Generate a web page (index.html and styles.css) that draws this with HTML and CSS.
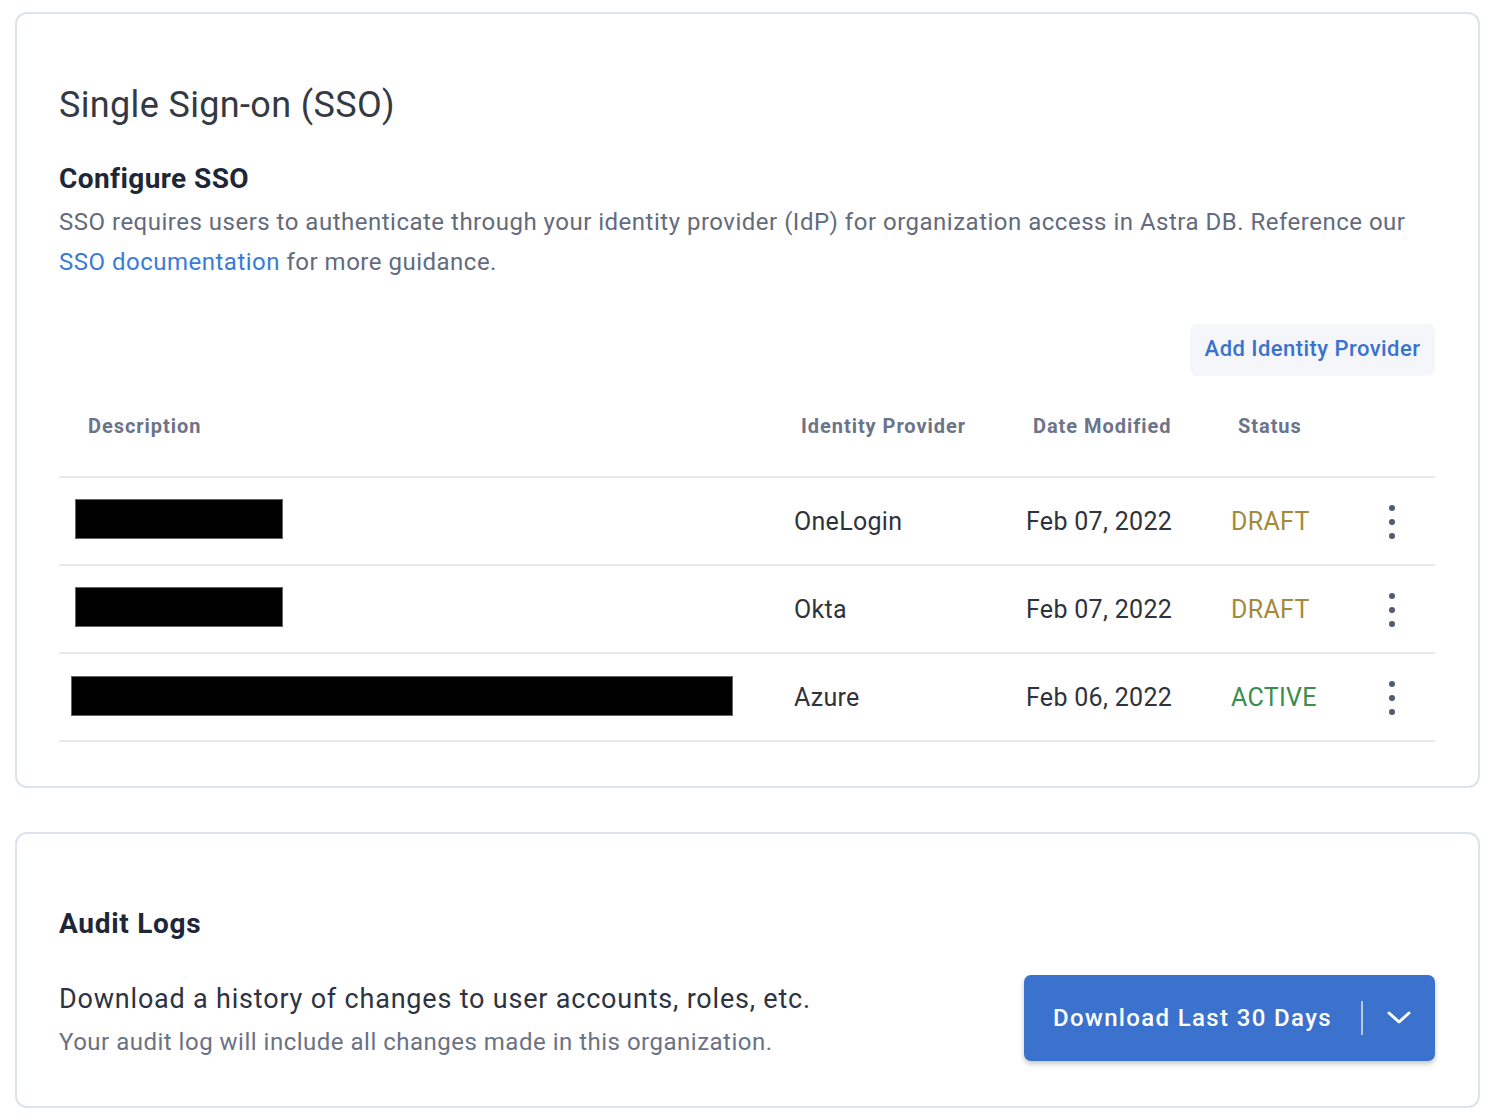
FILE: index.html
```html
<!DOCTYPE html>
<html lang="en">
<head>
<meta charset="utf-8">
<title>Single Sign-on (SSO)</title>
<link rel="stylesheet" href="styles.css">
</head>
<body>
<main class="page">
  <section class="card sso">
    <h1 class="title">Single Sign-on (SSO)</h1>
    <h2 class="heading">Configure SSO</h2>
    <p class="desc">SSO requires users to authenticate through your identity provider (IdP) for organization access in Astra DB. Reference our <a class="link" href="#">SSO documentation</a> for more guidance.</p>
    <div class="actions">
      <button class="btn-ghost" type="button">Add Identity Provider</button>
    </div>
    <div class="table">
      <div class="thead">
        <div class="th th-desc">Description</div>
        <div class="th">Identity Provider</div>
        <div class="th">Date Modified</div>
        <div class="th">Status</div>
        <div class="th"></div>
      </div>
      <div class="tr">
        <div class="td td-desc"><span class="redact redact-sm"></span></div>
        <div class="td">OneLogin</div>
        <div class="td">Feb 07, 2022</div>
        <div class="td status draft">DRAFT</div>
        <div class="td td-menu"><span class="kebab"><i></i><i></i><i></i></span></div>
      </div>
      <div class="tr">
        <div class="td td-desc"><span class="redact redact-sm"></span></div>
        <div class="td">Okta</div>
        <div class="td">Feb 07, 2022</div>
        <div class="td status draft">DRAFT</div>
        <div class="td td-menu"><span class="kebab"><i></i><i></i><i></i></span></div>
      </div>
      <div class="tr">
        <div class="td td-desc"><span class="redact redact-lg"></span></div>
        <div class="td">Azure</div>
        <div class="td">Feb 06, 2022</div>
        <div class="td status active">ACTIVE</div>
        <div class="td td-menu"><span class="kebab"><i></i><i></i><i></i></span></div>
      </div>
    </div>
  </section>

  <section class="card audit">
    <h2 class="heading">Audit Logs</h2>
    <div class="audit-row">
      <div class="audit-text">
        <p class="audit-main">Download a history of changes to user accounts, roles, etc.</p>
        <p class="audit-sub">Your audit log will include all changes made in this organization.</p>
      </div>
      <div class="split-btn">
        <button class="split-main" type="button">Download Last 30 Days</button>
        <span class="split-div"></span>
        <button class="split-caret" type="button" aria-label="More options">
          <svg width="24" height="14" viewBox="0 0 24 14"><path d="M2 2 L12 11 L22 2" fill="none" stroke="#ffffff" stroke-width="3" stroke-linecap="round" stroke-linejoin="round"/></svg>
        </button>
      </div>
    </div>
  </section>
</main>
</body>
</html>
```

FILE: styles.css
```css
* { box-sizing: border-box; }

html, body {
  margin: 0;
  padding: 0;
  background: #ffffff;
}

body {
  font-family: Roboto, "Liberation Sans", Arial, sans-serif;
  color: #2f333b;
}

.page {
  width: 1500px;
  padding: 12px 20px 0 15px;
  display: flex;
  flex-direction: column;
  gap: 44px;
}

.card {
  border: 2px solid #dde2ec;
  border-radius: 12px;
  background: #ffffff;
  padding: 0 43px 44px 42px;
}

.sso { padding-top: 69px; }

.title {
  margin: 0;
  font-size: 36px;
  line-height: 44px;
  font-weight: 400;
  letter-spacing: 0.35px;
  color: #343a44;
}

.heading {
  margin: 34px 0 0;
  font-size: 28px;
  line-height: 36px;
  font-weight: 700;
  letter-spacing: 0.4px;
  color: #1e2738;
}

.desc {
  margin: 5px 0 0;
  font-size: 24px;
  line-height: 40px;
  letter-spacing: 0.5px;
  color: #636b7c;
}

.link {
  color: #3b7bd8;
  text-decoration: none;
}

.actions {
  display: flex;
  justify-content: flex-end;
  margin-top: 42px;
}

.btn-ghost {
  height: 52px;
  width: 245px;
  border: none;
  border-radius: 7px;
  background: #f4f6f9;
  color: #3a72cd;
  font-family: Roboto, "Liberation Sans", Arial, sans-serif;
  font-size: 22px;
  font-weight: 500;
  letter-spacing: 0.45px;
  padding: 0 0 3px;
}

.table { display: flex; flex-direction: column; }

.thead, .tr {
  display: grid;
  grid-template-columns: 728px 232px 205px 136px 75px;
  border-bottom: 2px solid #e6e8ec;
  align-items: center;
}

.thead { height: 102px; }
.tr { height: 88px; }

.th {
  padding-left: 14px;
  font-size: 20px;
  font-weight: 700;
  color: #6c7489;
  letter-spacing: 0.95px;
}

.th-desc { padding-left: 29px; }

.td {
  padding-left: 7px;
  font-size: 25px;
  letter-spacing: 0.3px;
  color: #2f333b;
}

.td-desc { display: flex; align-items: center; padding-left: 16px; }

.redact {
  display: block;
  height: 40px;
  background: #000000;
  border: 1px solid #666;
}

.redact-sm { width: 208px; margin-top: -5px; }
.redact-lg { width: 662px; margin-left: -4px; margin-top: -2px; }

.status { letter-spacing: 0.3px; }
.draft { color: #a38a3a; }
.active { color: #3c8c4c; }

.td-menu { padding-left: 0; display: flex; justify-content: flex-start; }

.kebab {
  display: flex;
  flex-direction: column;
  gap: 8px;
  margin-left: 29px;
  margin-top: 2px;
}

.kebab i {
  display: block;
  width: 6px;
  height: 6px;
  border-radius: 50%;
  background: #505a73;
}

.audit { padding-top: 72px; }
.audit .heading { margin-top: 0; letter-spacing: 0.7px; }

.audit-row {
  display: flex;
  justify-content: space-between;
  align-items: flex-start;
  margin-top: 33px;
}

.audit-text { padding-top: 4px; }

.audit-main {
  margin: 0;
  font-size: 27px;
  line-height: 40px;
  letter-spacing: 0.8px;
  color: #2d3340;
}

.audit-sub {
  margin: 3px 0 0;
  font-size: 24px;
  line-height: 40px;
  letter-spacing: 0.5px;
  color: #6a7284;
}

.split-btn {
  display: flex;
  align-items: center;
  width: 411px;
  height: 86px;
  background: #3a72cd;
  border-radius: 7px;
  box-shadow: 0 3px 5px rgba(0, 0, 0, 0.22);
}

.split-main {
  border: none;
  background: transparent;
  color: #ffffff;
  font-family: Roboto, "Liberation Sans", Arial, sans-serif;
  font-size: 24px;
  font-weight: 500;
  letter-spacing: 1.35px;
  padding: 0 0 0 29px;
  height: 100%;
  width: 337px;
  text-align: left;
}

.split-div {
  display: block;
  width: 2px;
  height: 34px;
  background: #b9c6dc;
}

.split-caret {
  border: none;
  background: transparent;
  padding: 0;
  margin-left: 24px;
  width: 24px;
  height: 14px;
  display: flex;
}
```
